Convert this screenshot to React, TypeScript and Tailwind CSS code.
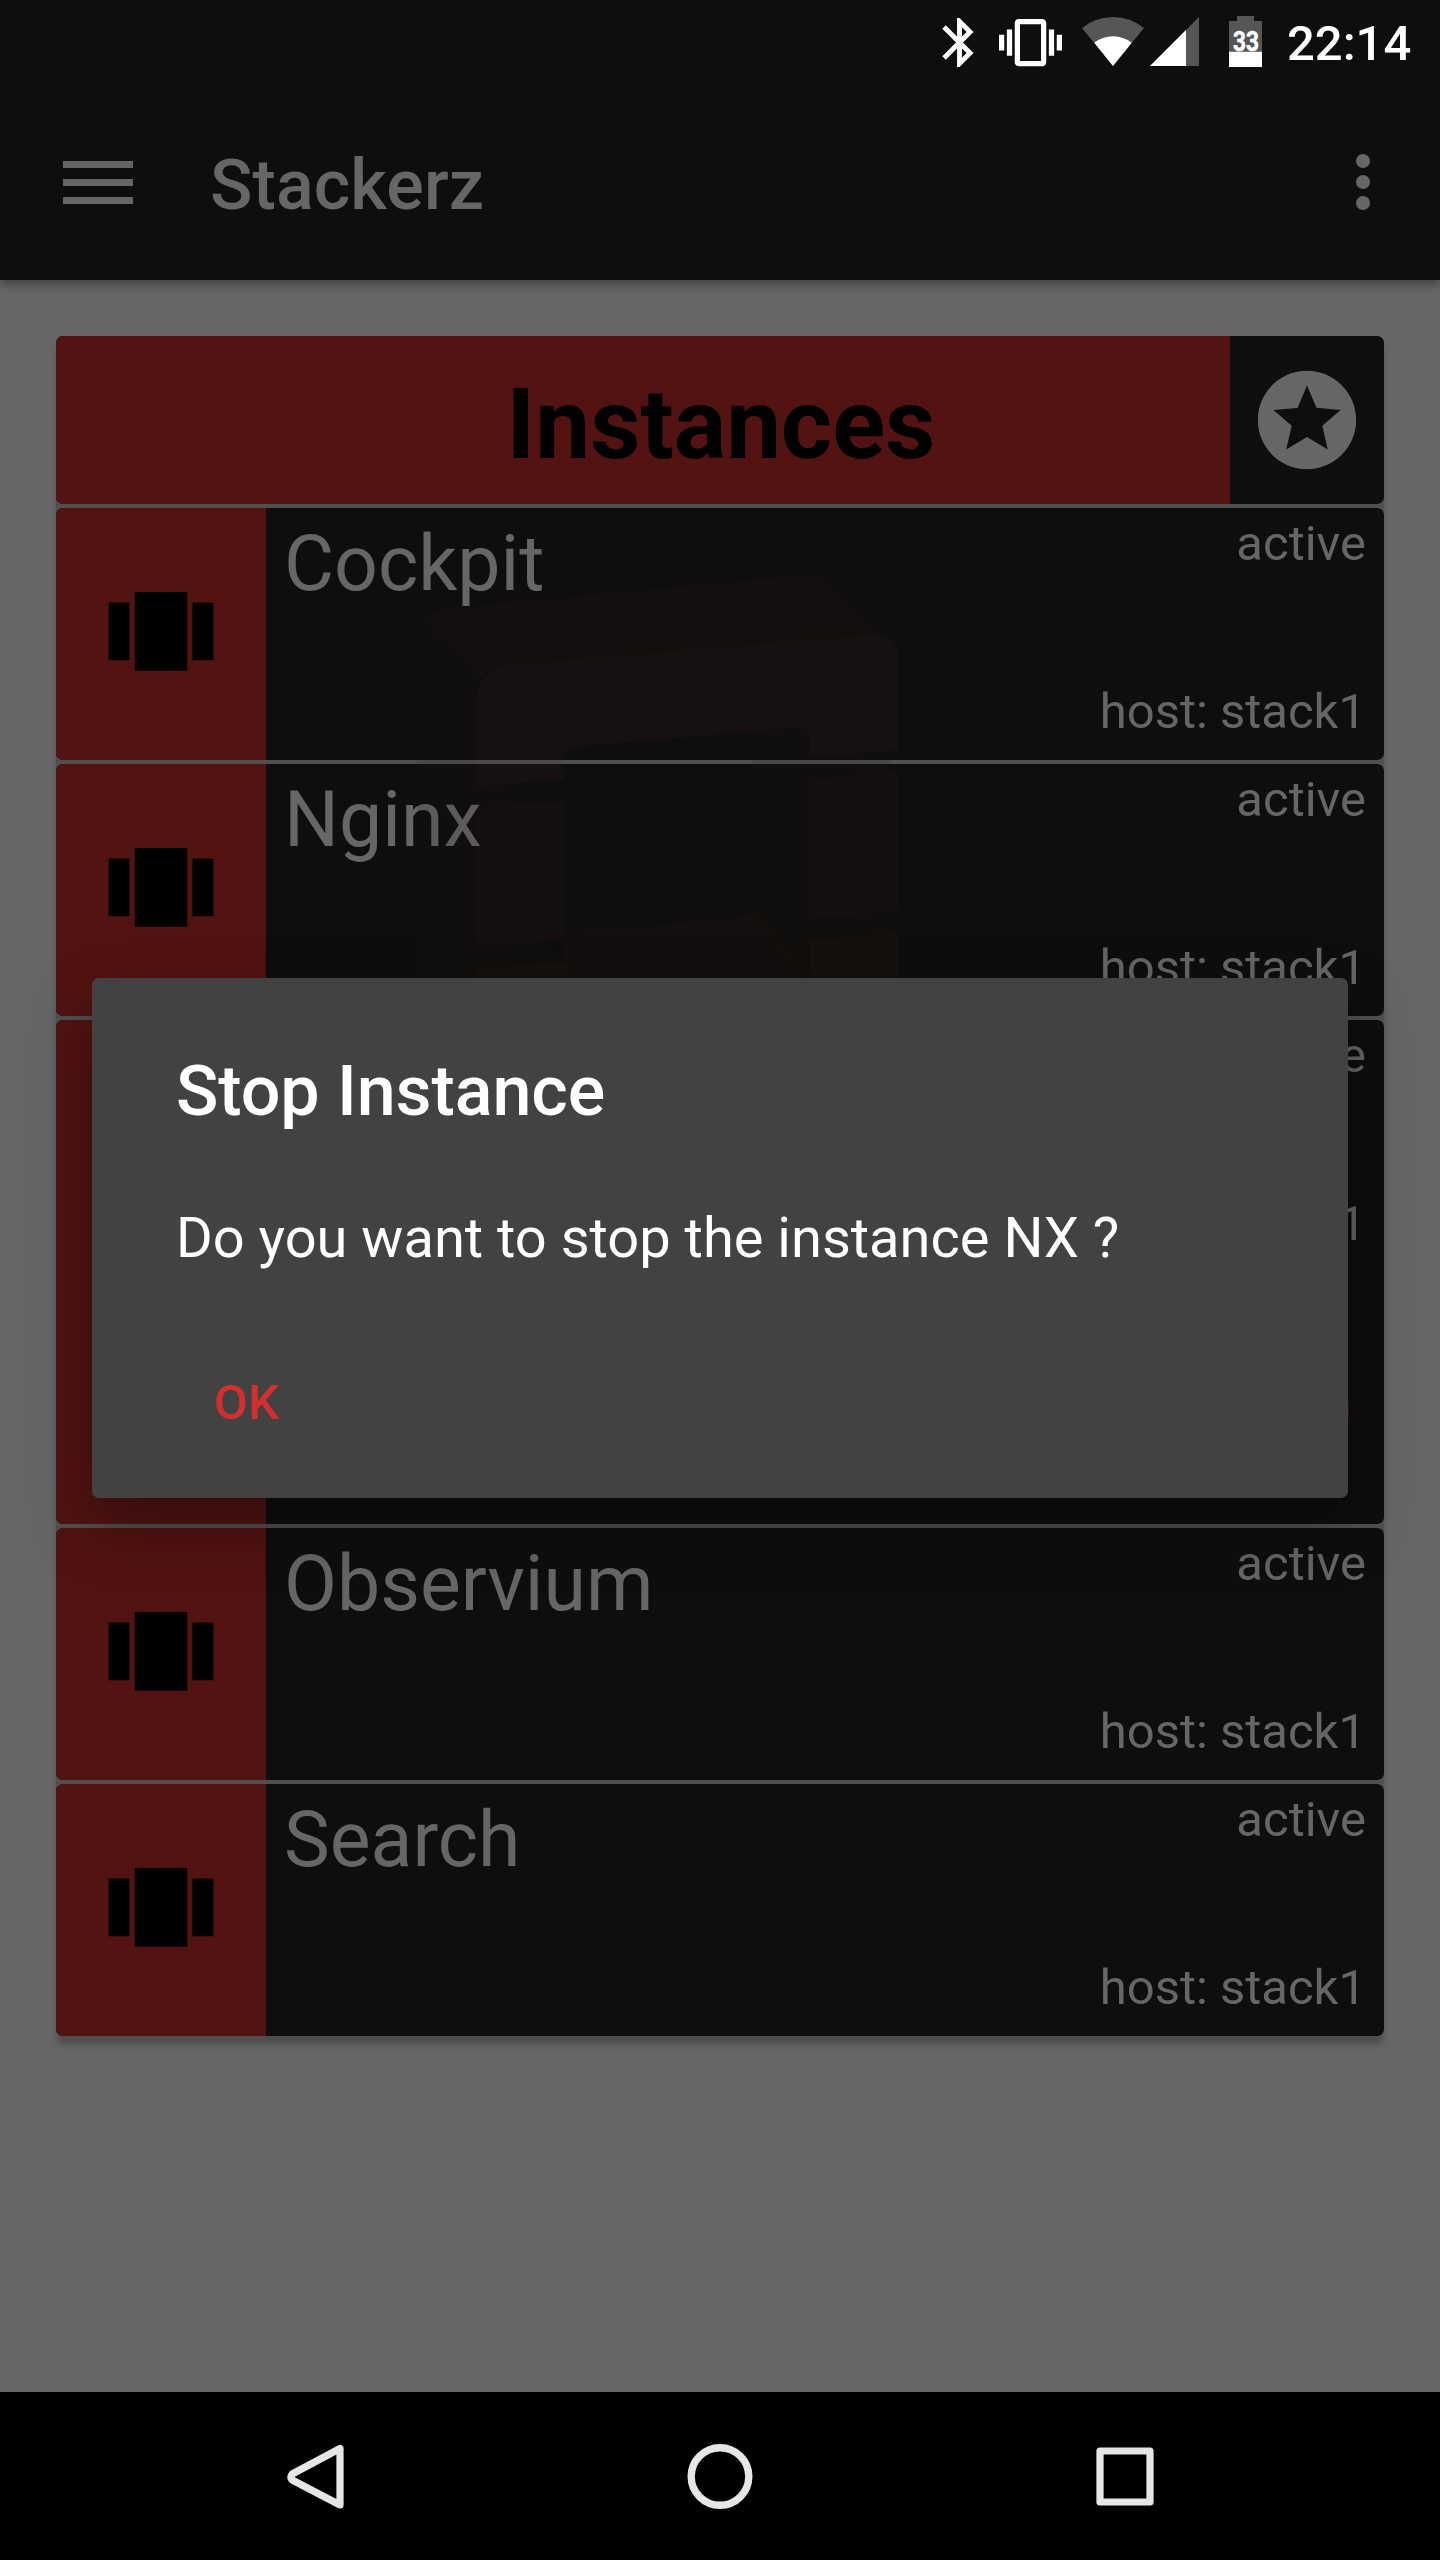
import React from 'react';

type Instance = { name: string; status: string; host: string; expanded?: boolean };

const instances: Instance[] = [
  { name: 'Cockpit', status: 'active', host: 'stack1' },
  { name: 'Nginx', status: 'active', host: 'stack1' },
  { name: 'NX', status: 'active', host: 'stack1', expanded: true },
  { name: 'Observium', status: 'active', host: 'stack1' },
  { name: 'Search', status: 'active', host: 'stack1' },
];

function BluetoothIcon() {
  return (
    <svg className="ml-[930px] mt-[13px] h-[59px] w-[59px] shrink-0" viewBox="0 0 24 24" fill="#fff">
      <path d="M17.71 7.71L12 2h-1v7.59L6.41 5 5 6.41 10.59 12 5 17.59 6.41 19 11 14.41V22h1l5.71-5.71-4.3-4.29 4.3-4.29zM13 5.83l1.88 1.88L13 9.59V5.83zm1.88 10.46L13 18.17v-3.76l1.88 1.88z" />
    </svg>
  );
}

function VibrateIcon() {
  return (
    <svg className="ml-[10px] mt-[11px] h-[63px] w-[63px] shrink-0" viewBox="0 0 24 24" fill="#fff">
      <path d="M0 15h2V9H0v6zm3 2h2V7H3v10zm19-8v6h2V9h-2zm-3 8h2V7h-2v10zM16.5 3h-9C6.67 3 6 3.67 6 4.5v15c0 .83.67 1.5 1.5 1.5h9c.83 0 1.5-.67 1.5-1.5v-15c0-.83-.67-1.5-1.5-1.5zM16 19H8V5h8v14z" />
    </svg>
  );
}

function WifiIcon() {
  return (
    <svg className="ml-[20px] mt-[17px] h-[49px] w-[62px] shrink-0" viewBox="0 0 62 49">
      <path d="M31 49L0 11Q14 0 31 0T62 11Z" fill="#565656" />
      <path d="M31 49L12.3 25.8Q20.5 19.3 31 19.3T49.7 25.8Z" fill="#fff" />
    </svg>
  );
}

function SignalIcon() {
  return (
    <svg className="ml-[6px] mt-[17px] h-[49px] w-[49px] shrink-0" viewBox="0 0 49 49">
      <path d="M0 49L49 0V49Z" fill="#565656" />
      <path d="M0 49L36 13V49Z" fill="#fff" />
    </svg>
  );
}

function BatteryIcon() {
  return (
    <svg className="ml-[30px] mt-[16px] h-[51px] w-[33px] shrink-0 overflow-visible" viewBox="0 0 33 51">
      <path d="M8 0H25V5H33V36H0V5H8Z" fill="#565656" />
      <path d="M0 35.7H33V51H0Z" fill="#fff" />
      <text x="4" y="35.3" fill="#fff" stroke="#fff" strokeWidth="0.5" fontSize="27" fontWeight="700" fontFamily="Roboto, sans-serif" textLength="26" lengthAdjust="spacingAndGlyphs">33</text>
    </svg>
  );
}

function StatusBar() {
  return (
    <div className="flex h-[84px] items-start">
      <BluetoothIcon />
      <VibrateIcon />
      <WifiIcon />
      <SignalIcon />
      <BatteryIcon />
      <span className="ml-[25px] mt-[15px] whitespace-nowrap text-[49px] leading-[58px] font-medium text-white">22:14</span>
    </div>
  );
}

function AppBar() {
  return (
    <div className="flex h-[196px] items-center">
      <div className="ml-[63px] flex w-[70px] flex-col gap-[11px]">
        <div className="h-[7px] bg-[#666]" />
        <div className="h-[7px] bg-[#666]" />
        <div className="h-[7px] bg-[#666]" />
      </div>
      <h1 className="ml-[77px] pt-[6px] text-[70px] leading-[82px] font-medium tracking-[0.1px] text-[#666]">Stackerz</h1>
      <div className="ml-auto mr-[70px] flex flex-col gap-[7px]">
        <div className="size-[14px] rounded-full bg-[#666]" />
        <div className="size-[14px] rounded-full bg-[#666]" />
        <div className="size-[14px] rounded-full bg-[#666]" />
      </div>
    </div>
  );
}

function ListHeader() {
  return (
    <div className="flex h-[168px] overflow-hidden rounded-[7px] bg-[#0e0e0e]">
      <div className="flex w-[1174px] items-center justify-center bg-[#521312] pl-[156px]">
        <h2 className="pt-[9px] text-[98px] leading-[115px] font-bold text-black">Instances</h2>
      </div>
      <div className="flex flex-1 items-center justify-center">
        <svg className="h-[118px] w-[118px]" viewBox="0 0 24 24" fill="#666">
          <path d="M11.99 2C6.47 2 2 6.48 2 12s4.47 10 9.99 10C17.52 22 22 17.52 22 12S17.52 2 11.99 2zm4.24 16L12 15.45 7.77 18l1.12-4.81-3.73-3.23 4.92-.42L12 5l1.92 4.53 4.92.42-3.73 3.23L16.23 18z" />
        </svg>
      </div>
    </div>
  );
}

function InstanceRow({ item }: { item: Instance }) {
  return (
    <div className="flex overflow-hidden rounded-[7px] bg-[#0e0e0e] text-[#666]">
      <div className="flex w-[210px] flex-col bg-[#521312]">
        <div className="flex h-[252px] items-center justify-center">
          <svg className="h-[126px] w-[126px]" viewBox="0 0 24 24" fill="#000">
            <path d="M7 19h10V4H7v15zm-5-2h4V6H2v11zM18 6v11h4V6h-4z" />
          </svg>
        </div>
      </div>
      <div className="flex flex-1 flex-col">
        <div className="flex h-[252px] justify-between pl-[18px] pr-[18px]">
          <span className="mt-[11px] text-[77px] leading-[90px]">{item.name}</span>
          <div className="flex flex-col items-end justify-between pb-[19px] pt-[7px] text-[49px] leading-[58px]">
            <span>{item.status}</span>
            <span>host: {item.host}</span>
          </div>
        </div>
        {item.expanded && (
          <div className="flex h-[252px] items-center justify-end pr-[35px] pt-[26px]">
            <div className="size-[130px] rounded-full bg-[#521312]" />
          </div>
        )}
      </div>
    </div>
  );
}

function CubeWatermark() {
  return (
    <svg className="pointer-events-none absolute left-0 top-[228px] h-[420px] w-[900px]" viewBox="56 564 900 420">
      <g fillOpacity="0.13">
        <path fill="#381412" d="M426 620Q434 610 448 608L805 575Q819 574 828 582L880 634L505 665Q490 668 482 677Z" />
        <path fill="#261612" d="M417 634Q418 626 426 620L482 677Q477 686 477 700V978H417V911L435 909L417 890V751L435 749L417 730Z" />
        <path fill="#4a1e1e" d="M477 700Q478 667 512 664L875 634Q898 634 898 656V750L810 758V742Q810 726 794 728L584 746Q564 748 564 762V779L477 787Z" />
        <path fill="#261612" d="M477 787L546 782L564 801L477 808ZM751 732L794 728Q810 726 810 742V978H798V965L751 913V880L767 878L751 863ZM810 758L884 752L898 772L810 779Z" />
        <path fill="#451a1a" d="M477 808L564 801V940L477 947ZM810 779L898 772V911L810 919Z" />
        <path fill="#261612" d="M477 947L546 941L564 963L477 968ZM810 919L882 913L898 933L810 939Z" />
        <path fill="#381412" d="M564 933L735 918Q751 914 751 913L798 960V978H564Z" />
        <path fill="#3a2612" d="M477 968L564 963V978H477ZM810 939L898 933V978H810Z" />
      </g>
    </svg>
  );
}

function StopDialog() {
  return (
    <div role="dialog" className="absolute left-[92px] top-[978px] flex h-[520px] w-[1256px] flex-col items-start rounded-[7px] bg-[#424242] pl-[84px] pt-[72px] text-white shadow-[0_28px_64px_rgba(0,0,0,0.36)]">
      <h2 className="text-[70px] leading-[82px] font-medium tracking-[-0.08px]">Stop Instance</h2>
      <p className="mt-[73px] text-[56px] leading-[66px]">Do you want to stop the instance NX ?</p>
      <button className="ml-[38px] mt-[103px] text-[49px] leading-[58px] font-medium tracking-[0.5px] text-[#d32f2f]">OK</button>
    </div>
  );
}

function NavBar() {
  return (
    <div className="relative flex h-[168px] items-start bg-black pt-[52px]">
      <svg className="ml-[287px] h-[66px] w-[57px]" viewBox="0 0 57 66" fill="none" stroke="#e6e6e6" strokeWidth="7.2" strokeLinejoin="round">
        <path d="M53 4.5V61L5.2 36Q2.6 33 5.2 30Z" />
      </svg>
      <svg className="ml-[343px] h-[66px] w-[66px]" viewBox="0 0 66 66" fill="none" stroke="#e6e6e6" strokeWidth="7.4">
        <circle cx="33" cy="32.5" r="28.8" />
      </svg>
      <svg className="ml-[342px] h-[66px] w-[60px]" viewBox="0 0 60 66" fill="none" stroke="#e6e6e6" strokeWidth="7.2" strokeLinejoin="round">
        <path d="M5 7H55V58H5Z" />
      </svg>
    </div>
  );
}

export default function App() {
  return (
    <div className="relative flex h-[2560px] w-[1440px] flex-col overflow-hidden bg-[#666] font-[Roboto,sans-serif]">
      <header className="relative bg-[#0e0e0e] shadow-[0_5px_9px_rgba(0,0,0,0.32)]">
        <StatusBar />
        <AppBar />
      </header>
      <main className="flex-1 px-[56px] pt-[56px]">
        <div className="relative">
          <div className="flex flex-col gap-[4px] rounded-[7px] bg-[#505050] shadow-[0_10px_6px_-1px_rgba(0,0,0,0.24)]">
            <ListHeader />
            {instances.map((item) => (
              <InstanceRow key={item.name} item={item} />
            ))}
          </div>
          <CubeWatermark />
        </div>
      </main>
      <StopDialog />
      <NavBar />
    </div>
  );
}
